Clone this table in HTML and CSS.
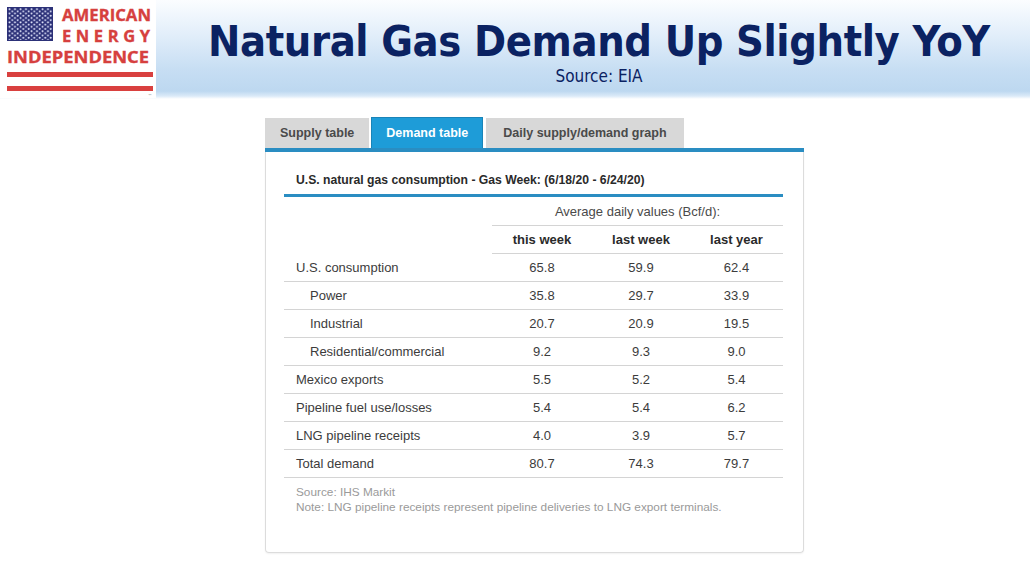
FILE: index.html
```html
<!DOCTYPE html>
<html>
<head>
<meta charset="utf-8">
<link rel="stylesheet" href="styles.css">
</head>
<body>
<header class="header">
  <div class="logo">
    <svg width="156" height="98" viewBox="0 0 156 98" xmlns="http://www.w3.org/2000/svg">
      <defs>
        <pattern id="stars" x="8" y="8" width="5.5" height="4.4" patternUnits="userSpaceOnUse">
          <circle cx="1.5" cy="1.2" r="1" fill="#e6eaff"/>
          <circle cx="4.25" cy="3.4" r="1" fill="#e6eaff"/>
        </pattern>
      </defs>
      <rect x="7" y="7" width="46" height="34" fill="#2c3178"/>
      <rect x="8" y="8" width="44" height="32" fill="url(#stars)"/>
      <text x="62" y="20.5" class="logo-text" textLength="89" lengthAdjust="spacingAndGlyphs">AMERICAN</text>
      <text x="62" y="41.5" class="logo-text" textLength="88" lengthAdjust="spacing">ENERGY</text>
      <text x="7" y="62.5" class="logo-text" textLength="142" lengthAdjust="spacingAndGlyphs">INDEPENDENCE</text>
      <rect x="7" y="72" width="146" height="5" fill="#d9403f"/>
      <rect x="7" y="86" width="146" height="5" fill="#d9403f"/>
      <text x="148" y="97" class="tm">™</text>
    </svg>
  </div>
  <div class="heading">
    <h1 class="title">Natural Gas Demand Up Slightly YoY</h1>
    <div class="subtitle">Source: EIA</div>
  </div>
</header>
<main class="main">
  <div class="widget">
    <div class="tabs">
      <div class="tab">Supply table</div>
      <div class="tab tab-active">Demand table</div>
      <div class="tab tab-wide">Daily supply/demand graph</div>
    </div>
    <div class="panel">
      <div class="panel-title">U.S. natural gas consumption - Gas Week: (6/18/20 - 6/24/20)</div>
      <table class="data">
        <colgroup>
          <col class="c-label"><col class="c1"><col class="c2"><col class="c3">
        </colgroup>
        <tr class="r-group"><td class="blank"></td><td colspan="3" class="group">Average daily values (Bcf/d):</td></tr>
        <tr class="r-head"><td class="blank"></td><th>this week</th><th>last week</th><th>last year</th></tr>
        <tr><td class="lbl">U.S. consumption</td><td>65.8</td><td>59.9</td><td>62.4</td></tr>
        <tr><td class="lbl sub">Power</td><td>35.8</td><td>29.7</td><td>33.9</td></tr>
        <tr><td class="lbl sub">Industrial</td><td>20.7</td><td>20.9</td><td>19.5</td></tr>
        <tr><td class="lbl sub">Residential/commercial</td><td>9.2</td><td>9.3</td><td>9.0</td></tr>
        <tr><td class="lbl">Mexico exports</td><td>5.5</td><td>5.2</td><td>5.4</td></tr>
        <tr><td class="lbl">Pipeline fuel use/losses</td><td>5.4</td><td>5.4</td><td>6.2</td></tr>
        <tr><td class="lbl">LNG pipeline receipts</td><td>4.0</td><td>3.9</td><td>5.7</td></tr>
        <tr><td class="lbl">Total demand</td><td>80.7</td><td>74.3</td><td>79.7</td></tr>
      </table>
      <div class="notes">
        <div>Source: IHS Markit</div>
        <div>Note: LNG pipeline receipts represent pipeline deliveries to LNG export terminals.</div>
      </div>
    </div>
  </div>
</main>
</body>
</html>
```

FILE: styles.css
```css
html, body {
  margin: 0;
  padding: 0;
  background: #ffffff;
}
body {
  width: 1030px;
  height: 579px;
  overflow: hidden;
  font-family: "Liberation Sans", Arial, sans-serif;
}
.header {
  height: 99px;
  display: flex;
  background: linear-gradient(to bottom, #fbfdff 0%, #e2eefa 35%, #c7def3 70%, #bdd8f0 92%, #dbeaf8 97%, #ffffff 100%);
}
.logo {
  width: 156px;
  height: 98px;
  background: #ffffff;
  flex: none;
}
.logo svg { display: block; }
.logo-text {
  font-family: "Open Sans", "DejaVu Sans", sans-serif;
  font-weight: 700;
  font-size: 16.5px;
  fill: #d6403e;
  stroke: #d6403e;
  stroke-width: 0.35px;
}
.tm {
  font-family: "DejaVu Sans", sans-serif;
  font-size: 4px;
  fill: #888;
}
.heading {
  flex: 1;
  display: flex;
  flex-direction: column;
  align-items: center;
  padding-left: 12px;
}
.title {
  margin: 15px 0 0 0;
  font-family: "DejaVu Sans Condensed", "DejaVu Sans", sans-serif;
  font-weight: 700;
  font-size: 43px;
  line-height: 52px;
  color: #0b2262;
  letter-spacing: -0.4px;
}
.subtitle {
  font-family: "DejaVu Sans Condensed", "DejaVu Sans", sans-serif;
  font-size: 17px;
  line-height: 20px;
  color: #0b2262;
  margin-top: -1px;
}
.main {
  padding: 18px 0 0 265px;
}
.widget {
  width: 539px;
}
.tabs {
  display: flex;
  align-items: flex-end;
  height: 31px;
  border-bottom: 4px solid #2a8dc2;
}
.tab {
  background: #d8d8d8;
  color: #4a4a4a;
  font-weight: 700;
  font-size: 12.5px;
  height: 30px;
  line-height: 30px;
  padding: 0 15px;
  margin-right: 2px;
  box-sizing: border-box;
}
.tab-active {
  background: #1e9cd8;
  color: #ffffff;
  height: 31px;
  border: 1px solid #1a84b8;
  border-bottom: none;
  padding: 0 14px;
  margin-right: 3px;
}
.tab-wide {
  padding: 0 17px;
}
.panel {
  height: 401px;
  box-sizing: border-box;
  border: 1px solid #dcdcdc;
  border-top: none;
  border-radius: 0 0 4px 4px;
  box-shadow: 0 1px 2px rgba(0,0,0,0.06);
  padding: 0 20px 0 18px;
}
.panel-title {
  padding: 20px 0 6px 12px;
  font-weight: 700;
  font-size: 12.2px;
  line-height: 16px;
  color: #2a2a2a;
  border-bottom: 3px solid #2a8dc2;
}
.data {
  width: 499px;
  border-collapse: collapse;
  font-size: 13px;
  color: #3c3c3c;
}
.c-label { width: 208px; }
.c1 { width: 100px; }
.c2 { width: 98px; }
.c3 { width: 93px; }
.data td, .data th {
  height: 27px;
  padding: 0;
  text-align: center;
  border-bottom: 1px solid #d4d4d4;
}
.data th {
  font-weight: 700;
  color: #2a2a2a;
}
.data td.blank {
  border-bottom: none;
}
.data td.group {
  color: #4a4a4a;
  padding-top: 1px;
}
.data td.lbl {
  text-align: left;
  padding-left: 12px;
}
.data td.sub {
  padding-left: 26px;
}
.notes {
  padding-top: 7px;
  font-size: 11.8px;
  line-height: 15px;
  color: #9a9a9a;
  padding-left: 12px;
}
```
